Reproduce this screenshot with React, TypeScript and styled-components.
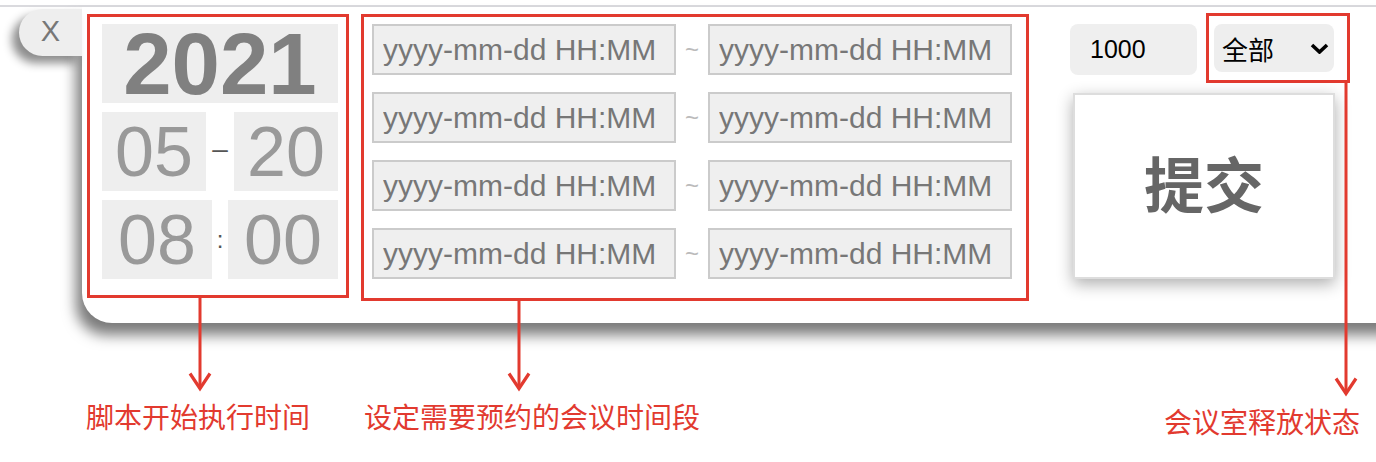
import React from 'react';
import styled, { createGlobalStyle } from 'styled-components';

const RED = '#e23a2f';
const LATIN = '"Liberation Sans", Arial, "Noto Sans CJK SC", sans-serif';
const CJK = '"Noto Sans CJK SC", "Liberation Sans", sans-serif';

const GlobalStyle = createGlobalStyle`
  html, body { margin: 0; padding: 0; background: #fff; }
  body { font-family: ${LATIN}; overflow: hidden; }
  *, *::before, *::after { box-sizing: border-box; }
`;

const Page = styled.div`
  position: relative;
  width: 1376px;
  height: 462px;
  overflow: hidden;
  padding-top: 5px;
`;

const TopRule = styled.div`
  height: 2px;
  background: #dadade;
`;

const Dock = styled.div`
  display: flex;
  align-items: flex-start;
  padding-left: 19px;
`;

const CloseTab = styled.div`
  position: relative;
  z-index: 2;
  flex: 0 0 63px;
  height: 47px;
  margin-top: 2px;
  display: flex;
  align-items: center;
  justify-content: center;
  padding-bottom: 3px;
  background: #eeeeee;
  border-radius: 24px 0 0 24px;
  box-shadow: -7px 7px 10px rgba(0, 0, 0, 0.45);
  color: #777;
  font-size: 29px;
`;

const Panel = styled.div`
  flex: 0 0 1320px;
  height: 316px;
  display: flex;
  align-items: flex-start;
  padding: 7px 0 0 5px;
  background: #fff;
  border-bottom-left-radius: 30px;
  box-shadow: -6px 12px 14px rgba(0, 0, 0, 0.52);
`;

const TimeFrame = styled.div`
  width: 262px;
  height: 284px;
  border: 3px solid ${RED};
  padding: 7px 8px 0 12px;
  display: flex;
  flex-direction: column;
  gap: 9px;
`;

const YearCell = styled.div`
  height: 79px;
  display: flex;
  align-items: center;
  justify-content: center;
  background: #eeeeee;
  color: #808080;
  font-size: 87px;
  font-weight: 700;
  line-height: 1;
`;

const DateRow = styled.div`
  display: flex;
  align-items: center;
`;

const Cell = styled.div<{ $w: number }>`
  flex: 0 0 ${(p) => p.$w}px;
  height: 79px;
  display: flex;
  align-items: center;
  justify-content: center;
  background: #eeeeee;
  color: #999;
  font-size: 70px;
  line-height: 1;
`;

const Sep = styled.div<{ $size: number; $lift: number }>`
  flex: 1;
  text-align: center;
  color: #555;
  font-size: ${(p) => p.$size}px;
  line-height: 1;
  margin-top: -${(p) => p.$lift}px;
`;

const RangeFrame = styled.div`
  width: 668px;
  height: 287px;
  margin-left: 12px;
  border: 3px solid ${RED};
  padding: 7px 14px 0 8px;
  display: flex;
  flex-direction: column;
  gap: 17px;
`;

const RangeRow = styled.div`
  display: flex;
  align-items: center;
`;

const DateInput = styled.input`
  width: 304px;
  height: 51px;
  padding: 0 0 0 9px;
  margin: 0;
  background: #efefef;
  border: 2px solid #cbcbcb;
  border-radius: 0;
  outline: none;
  font-family: ${LATIN};
  font-size: 30px;
  color: #777;
  &::placeholder {
    color: #777;
    opacity: 1;
  }
`;

const Tilde = styled.span`
  flex: 0 0 32px;
  text-align: center;
  color: #bbb;
  font-size: 24px;
`;

const SideColumn = styled.div`
  margin-left: 41px;
  margin-top: -1px;
  display: flex;
  flex-direction: column;
`;

const TopRow = styled.div`
  display: flex;
  align-items: flex-start;
`;

const CountInput = styled.input`
  width: 127px;
  height: 51px;
  margin: 11px 0 0 0;
  padding: 0 0 0 20px;
  background: #efefef;
  border: none;
  border-radius: 8px;
  outline: none;
  font-family: ${LATIN};
  font-size: 25px;
  color: #000;
`;

const SelectFrame = styled.div`
  width: 144px;
  height: 70px;
  margin-left: 9px;
  border: 3px solid ${RED};
  padding: 8px 13px 8px 5px;
`;

const SelectBox = styled.div`
  width: 120px;
  height: 48px;
  display: flex;
  align-items: center;
  justify-content: space-between;
  padding: 0 5px 0 8px;
  background: #eeeeee;
  border-radius: 8px;
  font-family: ${CJK};
  font-size: 26px;
  color: #000;
`;

const SubmitButton = styled.button`
  width: 262px;
  height: 186px;
  margin: 10px 0 0 3px;
  padding: 0 0 9px 0;
  background: #fff;
  border: 2px solid #dddddd;
  box-shadow: 0 5px 15px rgba(0, 0, 0, 0.32);
  font-family: ${CJK};
  font-size: 60px;
  font-weight: 700;
  color: #666;
  cursor: pointer;
`;

const ArrowSvg = styled.svg<{ $x: number; $y: number }>`
  position: absolute;
  left: ${(p) => p.$x - 12}px;
  top: ${(p) => p.$y}px;
  overflow: visible;
`;

const Label = styled.div<{ $left?: number; $right?: number; $top: number }>`
  position: absolute;
  top: ${(p) => p.$top}px;
  ${(p) => (p.$left !== undefined ? `left: ${p.$left}px;` : '')}
  ${(p) => (p.$right !== undefined ? `right: ${p.$right}px;` : '')}
  font-family: ${CJK};
  font-size: 28px;
  line-height: 28px;
  color: ${RED};
  white-space: nowrap;
`;

function Arrow({ x, y, len }: { x: number; y: number; len: number }) {
  const tip = len - 1.5;
  return (
    <ArrowSvg $x={x} $y={y} width={24} height={len} viewBox={`0 0 24 ${len}`}>
      <line x1={12} y1={0} x2={12} y2={tip} stroke={RED} strokeWidth={3} />
      <polyline
        points={`2,${tip - 15} 12,${tip} 22,${tip - 15}`}
        fill="none"
        stroke={RED}
        strokeWidth={3.2}
      />
    </ArrowSvg>
  );
}

function Chevron() {
  return (
    <svg width="19" height="11" viewBox="0 0 19 11">
      <polyline points="2,2 9.5,9 17,2" fill="none" stroke="#000" strokeWidth="3.6" />
    </svg>
  );
}

const rows = [0, 1, 2, 3];

export default function App() {
  return (
    <>
      <GlobalStyle />
      <Page>
        <TopRule />
        <Dock>
          <CloseTab>X</CloseTab>
          <Panel>
            <TimeFrame>
              <YearCell>2021</YearCell>
              <DateRow>
                <Cell $w={104}>05</Cell>
                <Sep $size={28} $lift={6}>–</Sep>
                <Cell $w={104}>20</Cell>
              </DateRow>
              <DateRow>
                <Cell $w={110}>08</Cell>
                <Sep $size={24} $lift={0}>:</Sep>
                <Cell $w={110}>00</Cell>
              </DateRow>
            </TimeFrame>
            <RangeFrame>
              {rows.map((r) => (
                <RangeRow key={r}>
                  <DateInput placeholder="yyyy-mm-dd HH:MM" />
                  <Tilde>~</Tilde>
                  <DateInput placeholder="yyyy-mm-dd HH:MM" />
                </RangeRow>
              ))}
            </RangeFrame>
            <SideColumn>
              <TopRow>
                <CountInput defaultValue="1000" />
                <SelectFrame>
                  <SelectBox>
                    <span>全部</span>
                    <Chevron />
                  </SelectBox>
                </SelectFrame>
              </TopRow>
              <SubmitButton>提交</SubmitButton>
            </SideColumn>
          </Panel>
        </Dock>
        <Arrow x={200} y={298} len={92} />
        <Arrow x={519} y={301} len={89} />
        <Arrow x={1346} y={83} len={312} />
        <Label $left={86} $top={402}>脚本开始执行时间</Label>
        <Label $left={364} $top={402}>设定需要预约的会议时间段</Label>
        <Label $right={16} $top={407}>会议室释放状态</Label>
      </Page>
    </>
  );
}
